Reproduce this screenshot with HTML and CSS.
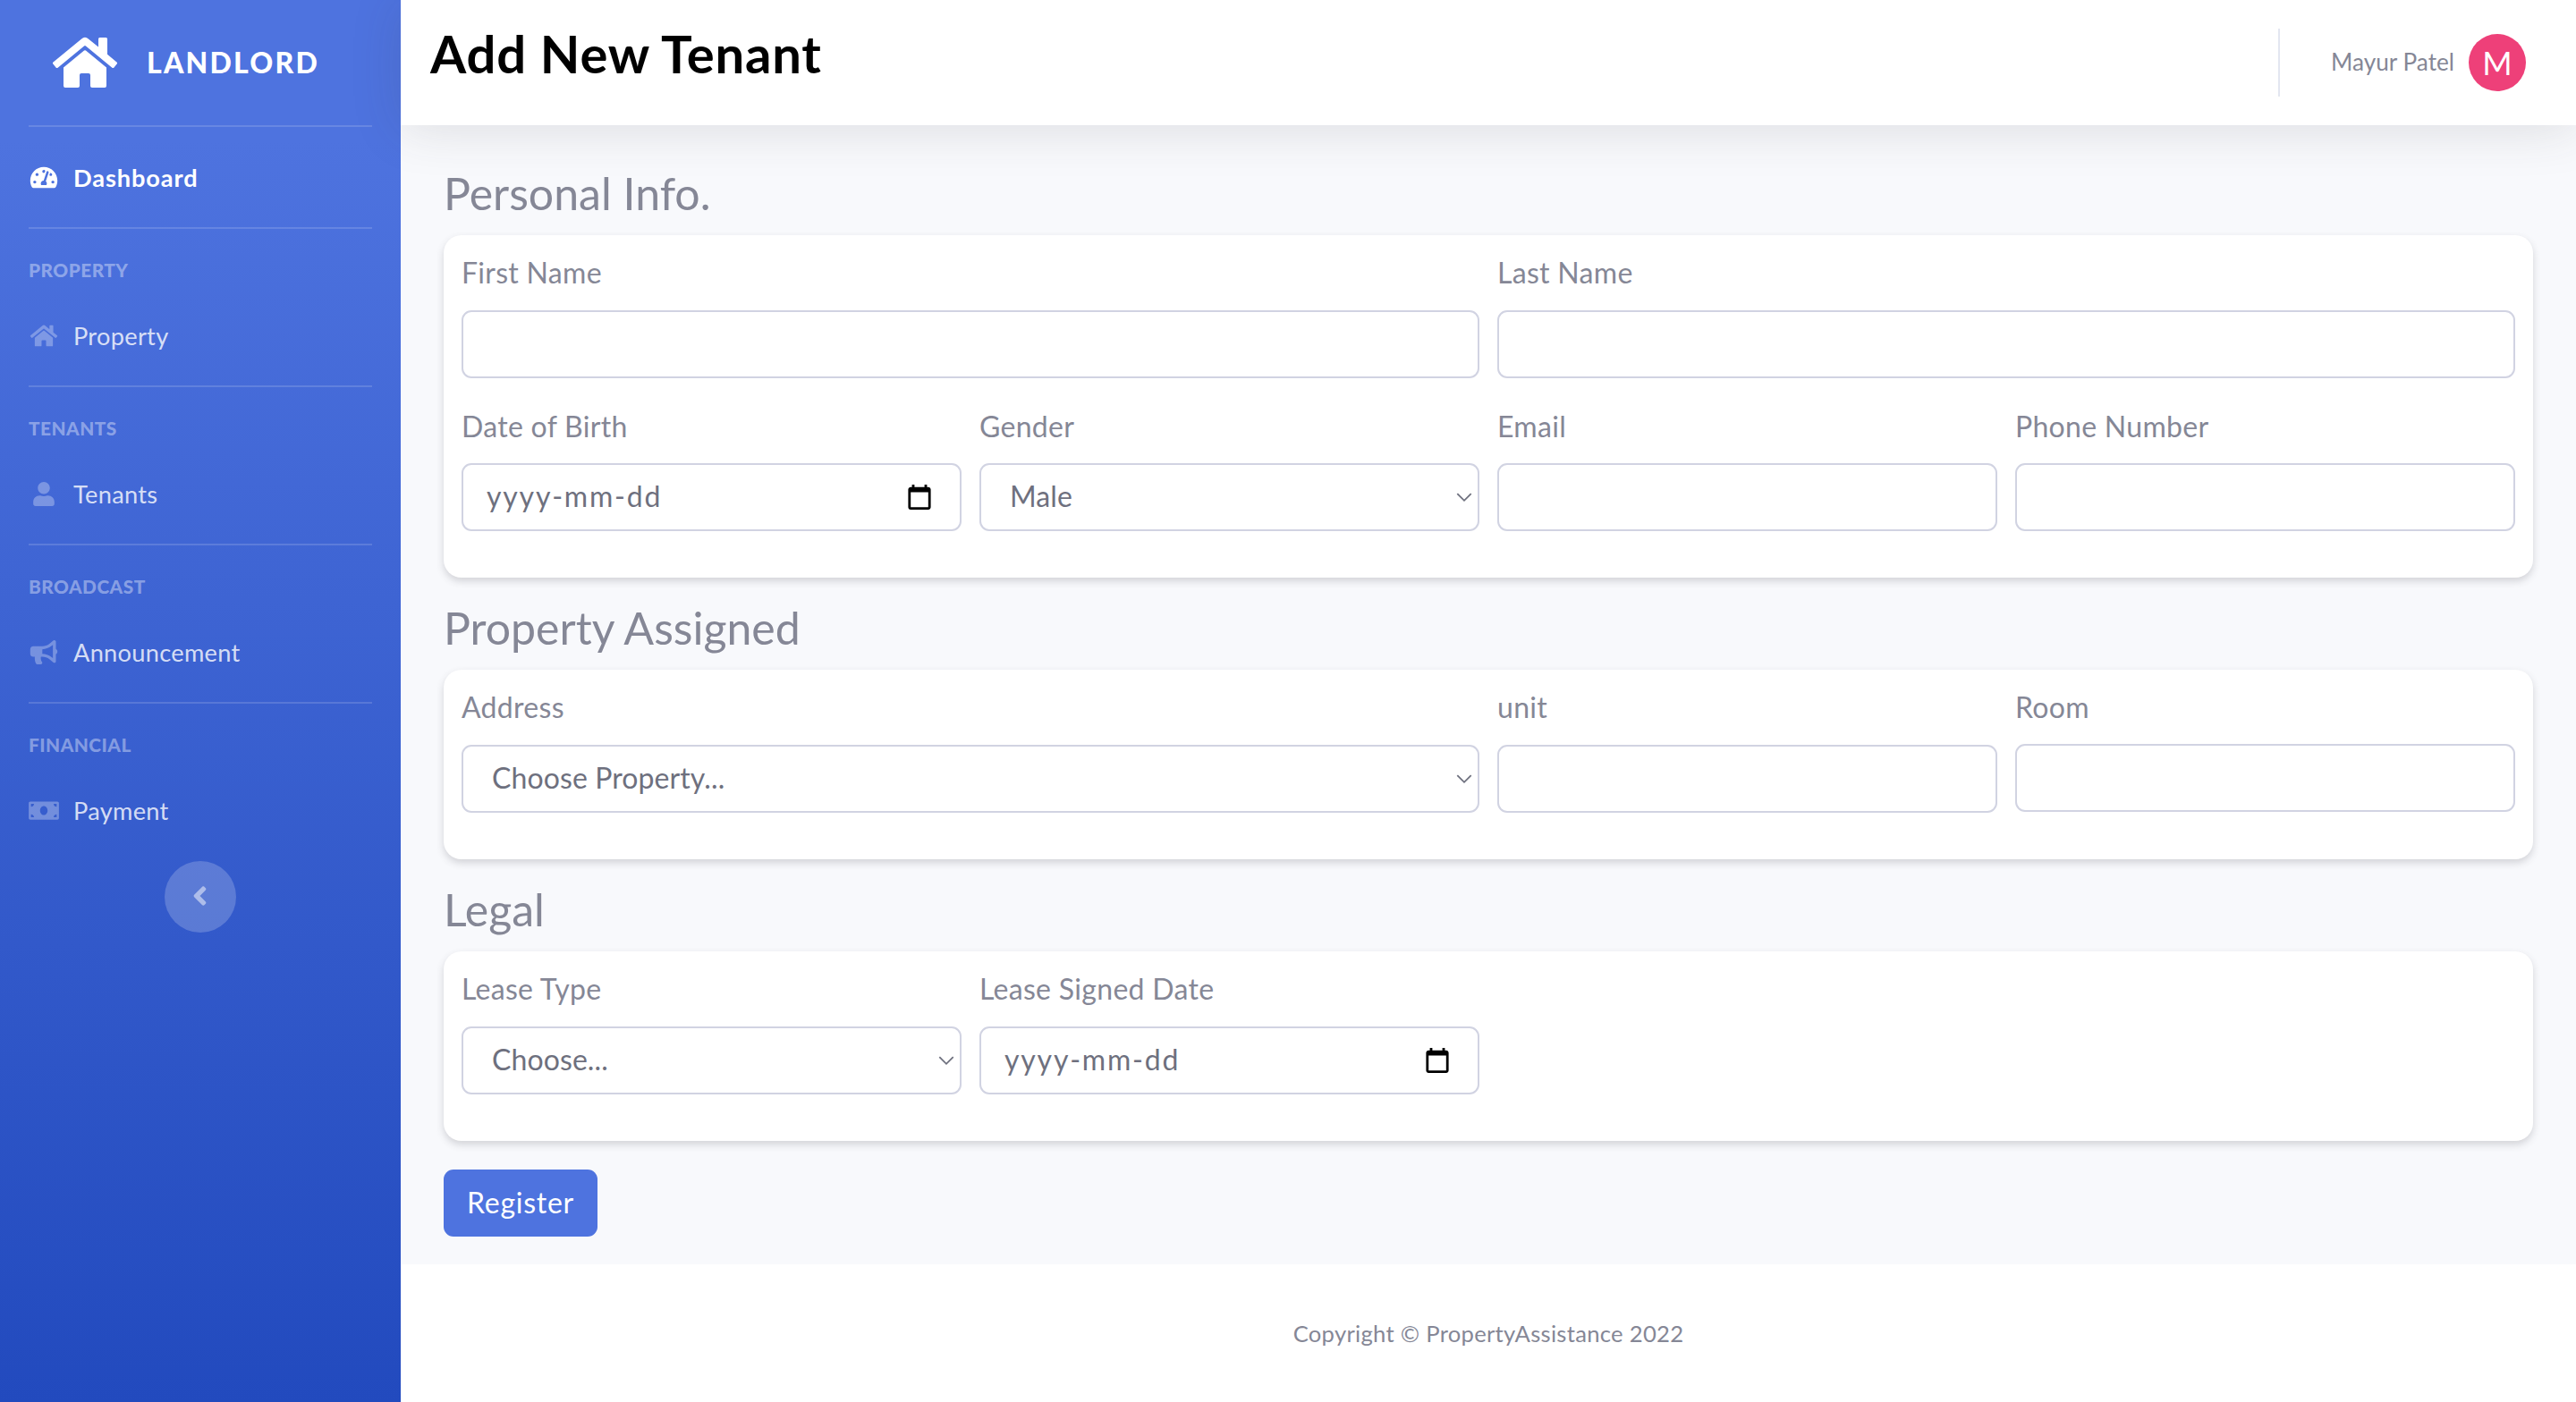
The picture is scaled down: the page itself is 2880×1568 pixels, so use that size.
FILE: index.html
```html
<!DOCTYPE html>
<html lang="en">

<head>
    <meta charset="UTF-8">
    <meta name="viewport" content="width=device-width, initial-scale=1.0">
    <title>Add New Tenant</title>
    <link rel="stylesheet" href="styles.css">
</head>

<body>
    <aside class="sidebar">
        <a class="brand" href="#">
            <svg class="brand-icon" viewBox="0 0 576 512"><path d="M280.37 148.26L96 300.11V464a16 16 0 0 0 16 16l112.06-.29a16 16 0 0 0 15.92-16V368a16 16 0 0 1 16-16h64a16 16 0 0 1 16 16v95.64a16 16 0 0 0 16 16.05L464 480a16 16 0 0 0 16-16V300L295.67 148.26a12.19 12.19 0 0 0-15.3 0zM571.6 251.47L488 182.56V44.05a12 12 0 0 0-12-12h-56a12 12 0 0 0-12 12v72.61L318.47 43a48 48 0 0 0-61 0L4.34 251.47a12 12 0 0 0-1.6 16.9l25.5 31A12 12 0 0 0 45.15 301l235.22-193.74a12.19 12.19 0 0 1 15.3 0L530.9 301a12 12 0 0 0 16.9-1.6l25.5-31a12 12 0 0 0-1.7-16.93z"/></svg>
            <span class="brand-text">LANDLORD</span>
        </a>
        <hr class="side-divider">
        <a class="nav-link active" href="#">
            <svg class="nav-icon" viewBox="0 0 576 512"><path d="M288 32C128.94 32 0 160.94 0 320c0 52.8 14.25 102.26 39.06 144.8 5.61 9.62 16.3 15.2 27.44 15.2h443c11.14 0 21.83-5.58 27.44-15.2C561.75 422.26 576 372.8 576 320c0-159.06-128.94-288-288-288zm0 64c14.71 0 26.58 10.13 30.32 23.65-1.11 2.26-2.64 4.23-3.45 6.67l-9.22 27.67c-5.13 3.49-10.97 6.01-17.64 6.01-17.67 0-32-14.33-32-32S270.33 96 288 96zM96 384c-17.67 0-32-14.33-32-32s14.33-32 32-32 32 14.33 32 32-14.33 32-32 32zm48-160c-17.67 0-32-14.33-32-32s14.33-32 32-32 32 14.33 32 32-14.33 32-32 32zm246.77-72.41l-61.33 184C343.13 347.33 352 364.54 352 384c0 11.72-3.38 22.55-8.88 32H232.88c-5.5-9.45-8.88-20.28-8.88-32 0-33.94 26.5-61.43 59.9-63.59l61.34-184.01c4.17-12.56 17.73-19.45 30.36-15.17 12.57 4.19 19.35 17.79 15.17 30.36zm14.66 57.2l15.52-46.55c3.47-1.29 7.13-2.23 11.05-2.23 17.67 0 32 14.33 32 32s-14.33 32-32 32c-11.38-.01-20.89-6.28-26.57-15.22zM480 384c-17.67 0-32-14.33-32-32s14.33-32 32-32 32 14.33 32 32-14.33 32-32 32z"/></svg>
            <span>Dashboard</span>
        </a>
        <hr class="side-divider">
        <div class="side-heading">PROPERTY</div>
        <a class="nav-link" href="#">
            <svg class="nav-icon" viewBox="0 0 576 512"><path d="M280.37 148.26L96 300.11V464a16 16 0 0 0 16 16l112.06-.29a16 16 0 0 0 15.92-16V368a16 16 0 0 1 16-16h64a16 16 0 0 1 16 16v95.64a16 16 0 0 0 16 16.05L464 480a16 16 0 0 0 16-16V300L295.67 148.26a12.19 12.19 0 0 0-15.3 0zM571.6 251.47L488 182.56V44.05a12 12 0 0 0-12-12h-56a12 12 0 0 0-12 12v72.61L318.47 43a48 48 0 0 0-61 0L4.34 251.47a12 12 0 0 0-1.6 16.9l25.5 31A12 12 0 0 0 45.15 301l235.22-193.74a12.19 12.19 0 0 1 15.3 0L530.9 301a12 12 0 0 0 16.9-1.6l25.5-31a12 12 0 0 0-1.7-16.93z"/></svg>
            <span>Property</span>
        </a>
        <hr class="side-divider">
        <div class="side-heading">TENANTS</div>
        <a class="nav-link" href="#">
            <svg class="nav-icon" viewBox="0 0 448 512"><path d="M224 256c70.7 0 128-57.3 128-128S294.7 0 224 0 96 57.3 96 128s57.3 128 128 128zm89.6 32h-16.7c-22.2 10.2-46.9 16-72.9 16s-50.6-5.8-72.9-16h-16.7C60.2 288 0 348.2 0 422.4V464c0 26.5 21.5 48 48 48h352c26.5 0 48-21.5 48-48v-41.6c0-74.2-60.2-134.4-134.4-134.4z"/></svg>
            <span>Tenants</span>
        </a>
        <hr class="side-divider">
        <div class="side-heading">BROADCAST</div>
        <a class="nav-link" href="#">
            <svg class="nav-icon" viewBox="0 0 576 512"><path d="M576 240c0-23.63-12.95-44.04-32-55.12V32.01C544 23.26 537.02 0 512 0c-7.12 0-14.19 2.38-19.98 7.02l-85.03 68.03C364.28 109.19 310.66 128 256 128H64c-35.35 0-64 28.65-64 64v96c0 35.35 28.65 64 64 64h33.7c-1.39 10.48-2.18 21.14-2.18 32 0 39.77 9.26 77.35 25.56 110.94 5.19 10.69 16.52 17.06 28.4 17.06h74.28c26.05 0 41.69-29.84 25.9-50.56-16.4-21.52-26.15-48.36-26.15-77.44 0-11.11 1.62-21.79 4.41-32H256c54.66 0 108.28 18.81 150.98 52.95l85.03 68.03a32.023 32.023 0 0 0 19.98 7.02c24.92 0 32-22.78 32-32V295.13C563.05 284.04 576 263.63 576 240zm-96 141.42l-33.05-26.44C392.95 311.78 325.12 288 256 288v-96c69.12 0 136.95-23.78 190.95-66.98L480 98.58v282.84z"/></svg>
            <span>Announcement</span>
        </a>
        <hr class="side-divider">
        <div class="side-heading">FINANCIAL</div>
        <a class="nav-link" href="#">
            <svg class="nav-icon" viewBox="0 0 640 512"><path d="M608 64H32C14.33 64 0 78.33 0 96v320c0 17.67 14.33 32 32 32h576c17.67 0 32-14.33 32-32V96c0-17.67-14.33-32-32-32zM48 400v-64c35.35 0 64 28.65 64 64H48zm0-224v-64h64c0 35.35-28.65 64-64 64zm272 176c-44.19 0-80-42.99-80-96 0-53.02 35.82-96 80-96s80 42.98 80 96c0 53.03-35.83 96-80 96zm272 48h-64c0-35.35 28.65-64 64-64v64zm0-224c-35.35 0-64-28.65-64-64h64v64z"/></svg>
            <span>Payment</span>
        </a>
        <button class="side-toggle" type="button">
            <svg viewBox="0 0 256 512"><path d="M31.7 239l136-136c9.4-9.4 24.6-9.4 33.9 0l22.6 22.6c9.4 9.4 9.4 24.6 0 33.9L127.9 256l96.4 96.4c9.4 9.4 9.4 24.6 0 33.9L201.7 409c-9.4 9.4-24.6 9.4-33.9 0l-136-136c-9.5-9.4-9.5-24.6-.1-34z"/></svg>
        </button>
    </aside>

    <div class="main">
        <header class="topbar">
            <h1>Add New Tenant</h1>
            <div class="user-area">
                <span class="user-name">Mayur Patel</span>
                <span class="avatar">M</span>
            </div>
        </header>

        <form class="content">
            <h3>Personal Info.</h3>
            <div class="card">
                <div class="form-row">
                    <div class="field span-2">
                        <label for="firstName">First Name</label>
                        <input type="text" id="firstName">
                    </div>
                    <div class="field span-2">
                        <label for="lastName">Last Name</label>
                        <input type="text" id="lastName">
                    </div>
                    <div class="field">
                        <label for="dob">Date of Birth</label>
                        <input type="text" class="date-input" id="dob" placeholder="yyyy-mm-dd">
                    </div>
                    <div class="field">
                        <label for="gender">Gender</label>
                        <select id="gender">
                            <option>Male</option>
                            <option>Female</option>
                        </select>
                    </div>
                    <div class="field">
                        <label for="email">Email</label>
                        <input type="text" id="email">
                    </div>
                    <div class="field">
                        <label for="phone">Phone Number</label>
                        <input type="text" id="phone">
                    </div>
                </div>
            </div>

            <h3>Property Assigned</h3>
            <div class="card">
                <div class="form-row">
                    <div class="field span-2">
                        <label for="address">Address</label>
                        <select id="address">
                            <option>Choose Property...</option>
                        </select>
                    </div>
                    <div class="field">
                        <label for="unit">unit</label>
                        <input type="text" id="unit">
                    </div>
                    <div class="field">
                        <label for="room">Room</label>
                        <input type="text" id="room">
                    </div>
                </div>
            </div>

            <h3>Legal</h3>
            <div class="card">
                <div class="form-row">
                    <div class="field">
                        <label for="leaseType">Lease Type</label>
                        <select id="leaseType">
                            <option>Choose...</option>
                        </select>
                    </div>
                    <div class="field">
                        <label for="leaseDate">Lease Signed Date</label>
                        <input type="text" class="date-input" id="leaseDate" placeholder="yyyy-mm-dd">
                    </div>
                </div>
            </div>

            <button type="submit" class="button">Register</button>
        </form>

        <footer class="footer">Copyright © PropertyAssistance 2022</footer>
    </div>
</body>

</html>
```

FILE: styles.css
```css
* {
    box-sizing: border-box;
}

body {
    margin: 0;
    display: flex;
    min-height: 1568px;
    background-color: #f8f9fc;
    font-family: Lato, "Open Sans", sans-serif;
    font-size: 32px;
    letter-spacing: 0.3px;
    color: #858796;
}

/* sidebar */
.sidebar {
    width: 448px;
    flex-shrink: 0;
    display: flex;
    flex-direction: column;
    background: linear-gradient(180deg, #4e73df 10%, #224abe 100%);
}

.brand {
    height: 140px;
    display: flex;
    align-items: center;
    padding-left: 59px;
    color: #ffffff;
    text-decoration: none;
}

.brand-icon {
    width: 72px;
    height: 64px;
    fill: #ffffff;
}

.brand-text {
    margin: 0 0 1px 33px;
    font-size: 32px;
    font-weight: 900;
    letter-spacing: 2.2px;
}

.side-divider {
    height: 2px;
    margin: 0 32px;
    border: 0;
    background-color: rgba(255, 255, 255, 0.15);
}

.side-heading {
    height: 63px;
    padding: 30px 32px 0;
    font-size: 20.8px;
    line-height: 32px;
    font-weight: 900;
    letter-spacing: 0.5px;
    color: rgba(255, 255, 255, 0.4);
}

.nav-link {
    height: 112px;
    display: flex;
    align-items: center;
    padding-left: 32px;
    font-size: 27.2px;
    color: rgba(255, 255, 255, 0.8);
    text-decoration: none;
}

.nav-link.active {
    color: #ffffff;
    font-weight: 700;
    letter-spacing: 0.9px;
}

.nav-icon {
    width: 34px;
    height: 27px;
    margin-right: 16px;
    fill: rgba(255, 255, 255, 0.3);
}

.nav-link.active .nav-icon {
    fill: #ffffff;
}

.side-toggle {
    width: 80px;
    height: 80px;
    margin: 1px auto 0;
    padding: 0 1px 0 0;
    display: flex;
    align-items: center;
    justify-content: center;
    border: 0;
    border-radius: 50%;
    background-color: rgba(255, 255, 255, 0.2);
}

.side-toggle svg {
    width: 17px;
    height: 34px;
    margin-bottom: 2px;
    fill: rgba(255, 255, 255, 0.5);
}

/* top bar */
.main {
    flex: 1;
    display: flex;
    flex-direction: column;
    min-width: 0;
}

.topbar {
    height: 140px;
    display: flex;
    align-items: center;
    justify-content: space-between;
    padding: 0 56px 0 33px;
    background-color: #ffffff;
    box-shadow: 0 4px 56px rgba(58, 59, 69, 0.15);
}

.topbar h1 {
    margin: 0 0 22px;
    font-size: 58px;
    font-weight: 700;
    letter-spacing: 0.8px;
    color: #000000;
}

.user-area {
    height: 76px;
    display: flex;
    align-items: center;
    padding-left: 57px;
    border-left: 2px solid #e3e6f0;
}

.user-name {
    margin: 0 16px 2px 0;
    font-size: 26.2px;
    letter-spacing: 0;
}

.avatar {
    width: 64px;
    height: 64px;
    display: flex;
    align-items: center;
    justify-content: center;
    border-radius: 50%;
    background-color: #ee4079;
    color: #ffffff;
    font-size: 36px;
}

/* form */
.content {
    padding: 40px 48px 31px;
}

.content h3 {
    margin: 0 0 13px;
    padding-top: 3px;
    font-size: 50px;
    line-height: 67px;
    font-weight: 400;
    letter-spacing: 0;
}

.card {
    margin-bottom: 20px;
    padding: 20px;
    background-color: #ffffff;
    border-radius: 20px;
    box-shadow: 0 4px 8px rgba(58, 59, 69, 0.2);
}

.form-row {
    display: grid;
    grid-template-columns: repeat(4, 1fr);
    column-gap: 20px;
}

.field {
    min-width: 0;
    margin-bottom: 32px;
}

.span-2 {
    grid-column: span 2;
}

label {
    display: block;
    margin-bottom: 20px;
    line-height: 44px;
}

.field:nth-child(n+3) label {
    margin-bottom: 19px;
}

input,
select {
    display: block;
    width: 100%;
    height: 76px;
    padding: 0 26px 3px;
    border: 2px solid #d1d3e2;
    border-radius: 11px;
    background-color: #ffffff;
    font: inherit;
    letter-spacing: inherit;
    color: #6e707e;
}

input::placeholder {
    color: #6e707e;
    opacity: 1;
}

.date-input {
    letter-spacing: 1.8px;
    background-image: url("data:image/svg+xml,%3Csvg xmlns='http://www.w3.org/2000/svg' viewBox='0 0 20 20'%3E%3Cpath d='M17 2h-1V0h-2v2H6V0H4v2H3C1.9 2 1 2.9 1 4v14c0 1.1.9 2 2 2h14c1.1 0 2-.9 2-2V4c0-1.1-.9-2-2-2zm0 16H3V6h14v12z'/%3E%3C/svg%3E");
    background-repeat: no-repeat;
    background-position: right 31px center;
    background-size: 28px 28px;
}

select {
    padding-left: 32px;
    letter-spacing: 0.1px;
    appearance: none;
    background-image: url("data:image/svg+xml,%3Csvg xmlns='http://www.w3.org/2000/svg' viewBox='0 0 16 10'%3E%3Cpath d='M1 1l7 7 7-7' fill='none' stroke='%236e707e' stroke-width='1.6'/%3E%3C/svg%3E");
    background-repeat: no-repeat;
    background-position: right 6px center;
    background-size: 18px 11px;
}

.button {
    display: block;
    height: 75px;
    margin-top: 32px;
    padding: 0 26px 2px;
    border: 0;
    border-radius: 11px;
    background-color: #4e73df;
    font: inherit;
    letter-spacing: 0.75px;
    color: #ffffff;
}

.footer {
    flex: 1;
    display: flex;
    align-items: center;
    justify-content: center;
    background-color: #ffffff;
    font-size: 25.6px;
}
```
